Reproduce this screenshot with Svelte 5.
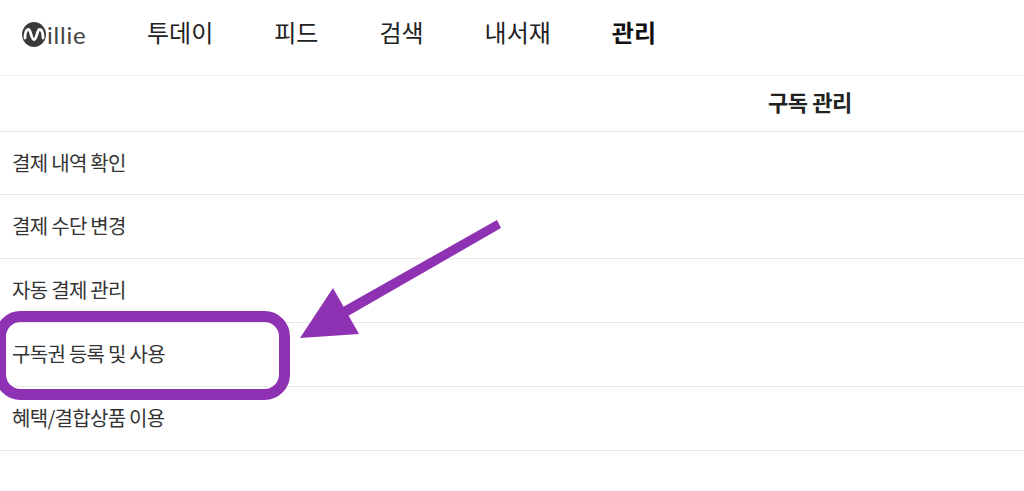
<script lang="ts">
	const navItems = [
		{ label: '투데이', active: false },
		{ label: '피드', active: false },
		{ label: '검색', active: false },
		{ label: '내서재', active: false },
		{ label: '관리', active: true }
	];

	const menuRows = ['결제 내역 확인', '결제 수단 변경', '자동 결제 관리', '구독권 등록 및 사용', '혜택/결합상품 이용'];
</script>

<div class="page">
	<header class="topbar">
		<div class="logo">
			<svg class="logo-mark" width="24" height="25" viewBox="0 0 24 25">
				<ellipse cx="12" cy="12.500" rx="12" ry="12.500" fill="#3a3a3a" />
				<path
					d="M3 16c0-4 1-8.500 3.500-8.500s2.500 10 5.500 10 3-10 5.500-10 3.500 4.500 3.500 8.500"
					fill="none"
					stroke="#fff"
					stroke-width="2.800"
					stroke-linecap="round"
				/>
			</svg>
			<span class="logo-text">illie</span>
		</div>
		<nav class="nav">
			{#each navItems as item (item.label)}
				<span class="nav-item" class:active={item.active}>{item.label}</span>
			{/each}
		</nav>
	</header>

	<div class="title-bar">구독 관리</div>

	<ul class="menu">
		{#each menuRows as row (row)}
			<li class="menu-row">{row}</li>
		{/each}
	</ul>

	<!-- purple annotation drawn over the screenshot -->
	<svg class="annotation" width="1024" height="491" viewBox="0 0 1024 491">
		<rect x="0.500" y="316.500" width="284" height="78" rx="20" fill="none" stroke="#8e32b3" stroke-width="11" />
		<path d="M497 220L501 228L348 316L343 307Z" fill="#8e32b3" />
		<path d="M333 288L359 334L300 338Z" fill="#8e32b3" />
	</svg>
</div>

<style>
	:global(body) {
		margin: 0;
		background: #fff;
	}
	.page {
		position: relative;
		width: 1024px;
		height: 491px;
		overflow: hidden;
		background: #fff;
		color: #222;
		font-family: 'Noto Sans CJK KR', 'Noto Sans', sans-serif;
	}
	.topbar {
		display: flex;
		align-items: center;
		height: 75px;
		padding-left: 22px;
		border-bottom: 1px solid #eee;
	}
	.logo {
		display: flex;
		align-items: center;
		gap: 1px;
		width: 125px;
		margin-top: -6px;
	}
	.logo-text {
		font-family: 'Lato', sans-serif;
		font-size: 24px;
		letter-spacing: 0.800px;
		color: #444;
	}
	.nav {
		display: flex;
		gap: 61px;
		margin-top: -12px;
	}
	.nav-item {
		font-size: 24px;
		line-height: 30px;
		color: #222;
	}
	.nav-item.active {
		font-weight: 700;
		color: #111;
	}
	.title-bar {
		height: 55px;
		padding-left: 768px;
		border-bottom: 1px solid #e4e4e4;
		font-size: 22px;
		font-weight: 700;
		line-height: 51px;
		letter-spacing: -0.400px;
		color: #222;
	}
	.menu {
		list-style: none;
		margin: 0;
		padding: 0;
	}
	.menu-row {
		height: 47px;
		padding: 16px 0 0 12px;
		border-bottom: 1px solid #e8e8e8;
		font-size: 20px;
		line-height: 30px;
		letter-spacing: -0.700px;
		color: #333;
	}
	.menu-row:first-child {
		height: 46px;
	}
	.annotation {
		position: absolute;
		left: 0;
		top: 0;
		pointer-events: none;
	}
</style>
